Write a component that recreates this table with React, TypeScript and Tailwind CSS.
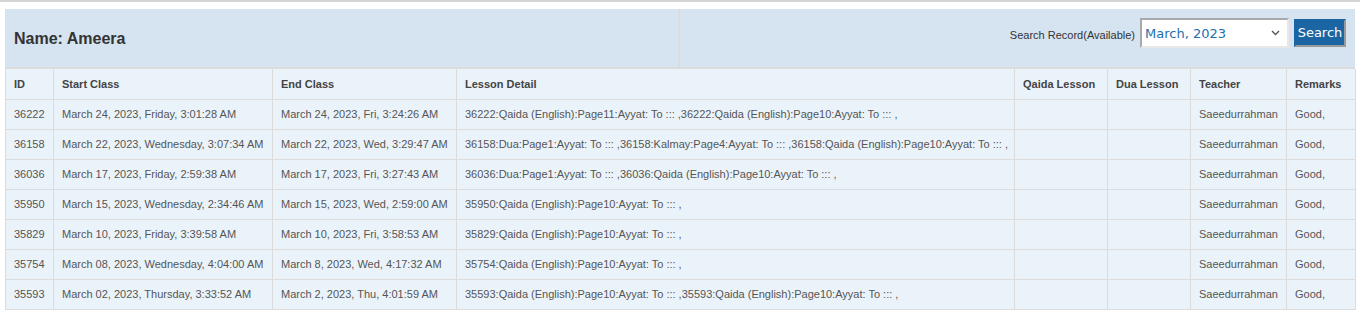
const rows = [
  ["36222", "March 24, 2023, Friday, 3:01:28 AM", "March 24, 2023, Fri, 3:24:26 AM", "36222:Qaida (English):Page11:Ayyat: To ::: ,36222:Qaida (English):Page10:Ayyat: To ::: ,"],
  ["36158", "March 22, 2023, Wednesday, 3:07:34 AM", "March 22, 2023, Wed, 3:29:47 AM", "36158:Dua:Page1:Ayyat: To ::: ,36158:Kalmay:Page4:Ayyat: To ::: ,36158:Qaida (English):Page10:Ayyat: To ::: ,"],
  ["36036", "March 17, 2023, Friday, 2:59:38 AM", "March 17, 2023, Fri, 3:27:43 AM", "36036:Dua:Page1:Ayyat: To ::: ,36036:Qaida (English):Page10:Ayyat: To ::: ,"],
  ["35950", "March 15, 2023, Wednesday, 2:34:46 AM", "March 15, 2023, Wed, 2:59:00 AM", "35950:Qaida (English):Page10:Ayyat: To ::: ,"],
  ["35829", "March 10, 2023, Friday, 3:39:58 AM", "March 10, 2023, Fri, 3:58:53 AM", "35829:Qaida (English):Page10:Ayyat: To ::: ,"],
  ["35754", "March 08, 2023, Wednesday, 4:04:00 AM", "March 8, 2023, Wed, 4:17:32 AM", "35754:Qaida (English):Page10:Ayyat: To ::: ,"],
  ["35593", "March 02, 2023, Thursday, 3:33:52 AM", "March 2, 2023, Thu, 4:01:59 AM", "35593:Qaida (English):Page10:Ayyat: To ::: ,35593:Qaida (English):Page10:Ayyat: To ::: ,"],
];

const cols = [
  { title: "ID", w: "w-[48px]" },
  { title: "Start Class", w: "w-[219px]" },
  { title: "End Class", w: "w-[184px]" },
  { title: "Lesson Detail", w: "w-[558px]" },
  { title: "Qaida Lesson", w: "w-[93px]" },
  { title: "Dua Lesson", w: "w-[83px]" },
  { title: "Teacher", w: "w-[96px]" },
  { title: "Remarks", w: "w-[69px]" },
];

export default function App() {
  return (
    <div className="bg-white h-[333px] w-[1363px] font-['Liberation_Sans',Arial,sans-serif]">
      <div className="h-[2px] w-[1360px] bg-[#d4d4d4]" />
      <div className="ml-[5px] mt-[7px] w-[1350px]">
        {/* header panel */}
        <div className="flex h-[60px] bg-[#d6e3f0] border-b-2 border-[#dcdcdc]">
          <div className="w-[675px] border-r-2 border-[#dcdcdc] flex items-center pl-[9px] pt-[1px]">
            <h2 className="text-[16px] font-bold text-[#333]">Name: Ameera</h2>
          </div>
          <div className="flex-1 flex items-start justify-end pr-[9px] pt-[9px]">
            <span className="text-[11px] text-[#333] mt-[9px] mr-[5px]">Search Record(Available)</span>
            <div className="relative w-[149px] h-[30px] bg-white border-2 border-[#a9a9a9] border-r-[#e8e8e8] border-b-[#e8e8e8]">
              <span className="absolute left-[3px] top-[4px] text-[13px] text-[#1e6fb0] font-['DejaVu_Sans',Verdana,sans-serif]">March, 2023</span>
              <svg className="absolute right-[7px] top-[10px]" width="9" height="6" viewBox="0 0 9 6">
                <path d="M1 1l3.5 3.5L8 1" fill="none" stroke="#555" strokeWidth="1.4" />
              </svg>
            </div>
            <button className="ml-[5px] mt-[1px] w-[52px] h-[28px] bg-[#1c65a3] text-white text-[13px] font-['DejaVu_Sans',Verdana,sans-serif] border-2 border-[#1c65a3] border-r-[#9a9a9a] border-b-[#9a9a9a]">
              Search
            </button>
          </div>
        </div>

        {/* records table */}
        <table className="table-fixed border-collapse w-[1350px] text-[11px] bg-[#ebf3fa]">
          <colgroup>
            {cols.map((c) => (
              <col key={c.title} className={c.w} />
            ))}
          </colgroup>
          <thead>
            <tr className="h-[30px]">
              {cols.map((c) => (
                <th key={c.title} className="border border-t-0 border-[#dcdcdc] text-left font-bold text-[#444] px-[8px] whitespace-nowrap">
                  {c.title}
                </th>
              ))}
            </tr>
          </thead>
          <tbody>
            {rows.map((r) => (
              <tr key={r[0]} className="h-[30px]">
                {r.map((cell, i) => (
                  <td key={i} className="border border-[#dcdcdc] text-[#555] px-[8px] whitespace-nowrap">
                    {cell}
                  </td>
                ))}
                <td className="border border-[#dcdcdc]" />
                <td className="border border-[#dcdcdc]" />
                <td className="border border-[#dcdcdc] text-[#555] px-[8px]">Saeedurrahman</td>
                <td className="border border-[#dcdcdc] text-[#555] px-[8px]">Good,</td>
              </tr>
            ))}
          </tbody>
        </table>
      </div>
    </div>
  );
}
